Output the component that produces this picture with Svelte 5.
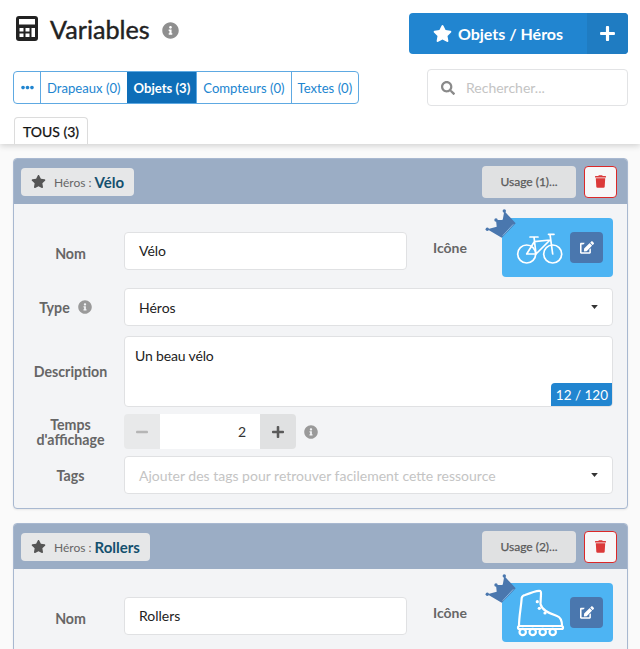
<script>
	const items = [
		{ name: 'Vélo', usage: 1, count: '12 / 120', desc: 'Un beau vélo', time: 2, kind: 'bike' },
		{ name: 'Rollers', usage: 2, count: '11 / 120', desc: 'Des rollers', time: 2, kind: 'roller' }
	];
	const tabs = ['Drapeaux (0)', 'Objets (3)', 'Compteurs (0)', 'Textes (0)'];

	const star = 'M259.3 17.8L194 150.2 47.9 171.5c-26.2 3.8-36.7 36.1-17.7 54.6l105.7 103-25 145.5c-4.5 26.3 23.2 46 46.4 33.7L288 439.6l130.7 68.7c23.2 12.2 50.9-7.4 46.4-33.7l-25-145.5 105.7-103c19-18.5 8.5-50.8-17.7-54.6L382 150.2 316.7 17.8c-11.7-23.6-45.6-23.9-57.4 0z';
	const info = 'M256 8C119.043 8 8 119.083 8 256c0 136.997 111.043 248 248 248s248-111.003 248-248C504 119.083 392.957 8 256 8zm0 110c23.196 0 42 18.804 42 42s-18.804 42-42 42-42-18.804-42-42 18.804-42 42-42zm56 254c0 6.627-5.373 12-12 12h-88c-6.627 0-12-5.373-12-12v-24c0-6.627 5.373-12 12-12h12v-64h-12c-6.627 0-12-5.373-12-12v-24c0-6.627 5.373-12 12-12h64c6.627 0 12 5.373 12 12v100h12c6.627 0 12 5.373 12 12v24z';
	const plus = 'M416 208H272V64c0-17.67-14.33-32-32-32h-32c-17.67 0-32 14.33-32 32v144H32c-17.67 0-32 14.33-32 32v32c0 17.67 14.33 32 32 32h144v144c0 17.67 14.33 32 32 32h32c17.67 0 32-14.33 32-32V304h144c17.67 0 32-14.33 32-32v-32c0-17.67-14.33-32-32-32z';
	const minus = 'M416 208H32c-17.67 0-32 14.33-32 32v32c0 17.67 14.33 32 32 32h384c17.67 0 32-14.33 32-32v-32c0-17.67-14.33-32-32-32z';
	const trash = 'M432 32H312l-9.4-18.7A24 24 0 0 0 281.1 0H166.8a23.72 23.72 0 0 0-21.4 13.3L136 32H16A16 16 0 0 0 0 48v32a16 16 0 0 0 16 16h416a16 16 0 0 0 16-16V48a16 16 0 0 0-16-16zM53.2 467a48 48 0 0 0 47.9 45h245.8a48 48 0 0 0 47.9-45L416 128H32z';
	const edit = 'M402.6 83.2l90.2 90.2c3.8 3.8 3.8 10 0 13.8L274.4 405.6l-92.8 10.3c-12.4 1.4-22.9-9.1-21.5-21.5l10.3-92.8L388.8 83.2c3.8-3.8 10-3.8 13.8 0zm162-22.9l-48.8-48.8c-15.2-15.2-39.9-15.2-55.2 0l-35.4 35.4c-3.8 3.8-3.8 10 0 13.8l90.2 90.2c3.8 3.8 10 3.8 13.8 0l35.4-35.4c15.2-15.3 15.2-40 0-55.2zM384 346.2V448H64V128h73.1c3.2 0 6.2-1.3 8.5-3.5l40-40c7.6-7.6 2.2-20.5-8.5-20.5H48C21.5 64 0 85.5 0 112v352c0 26.5 21.5 48 48 48h352c26.5 0 48-21.5 48-48V306.2c0-10.7-12.9-16-20.5-8.5l-40 40c-2.2 2.3-3.5 5.3-3.5 8.5z';
	const dots = 'M328 256c0 39.8-32.2 72-72 72s-72-32.2-72-72 32.2-72 72-72 72 32.2 72 72zm104-72c-39.8 0-72 32.2-72 72s32.2 72 72 72 72-32.2 72-72-32.2-72-72-72zm-352 0c-39.8 0-72 32.2-72 72s32.2 72 72 72 72-32.2 72-72-32.2-72-72-72z';
	const search = 'M505 442.7L405.3 343c-4.5-4.5-10.6-7-17-7H372c27.6-35.3 44-79.7 44-128C416 93.1 322.9 0 208 0S0 93.1 0 208s93.1 208 208 208c48.3 0 92.7-16.4 128-44v16.3c0 6.4 2.5 12.5 7 17l99.7 99.7c9.4 9.4 24.6 9.4 33.9 0l28.3-28.3c9.4-9.4 9.4-24.6.1-34zM208 336c-70.7 0-128-57.2-128-128 0-70.7 57.2-128 128-128 70.7 0 128 57.2 128 128 0 70.7-57.2 128-128 128z';
</script>

{#snippet icon(d, w, h, cls)}
	<svg class={cls} viewBox="0 0 {w} {h}" fill="currentColor"><path {d} /></svg>
{/snippet}

{#snippet caret()}
	<svg class="caret" viewBox="0 0 10 6" fill="currentColor"><path d="M0 0h10L5 6z" /></svg>
{/snippet}

<div class="page">
	<header class="top">
		<div class="top-row">
			<div class="title">
				<svg class="calc" viewBox="0 0 22 25">
					<rect width="22" height="25" rx="3" fill="#222" />
					<g fill="#fff">
						<rect x="3" y="3" width="16" height="5.500" />
						<rect x="3.500" y="12" width="4" height="3.500" />
						<rect x="9.500" y="12" width="4" height="3.500" />
						<rect x="3.500" y="17.500" width="4" height="3.500" />
						<rect x="9.500" y="17.500" width="4" height="3.500" />
						<rect x="15.500" y="12" width="3.500" height="9" />
					</g>
				</svg>
				<h1>Variables</h1>
				{@render icon(info, 512, 512, 'title-info')}
			</div>
			<div class="add">
				<div class="add-main">{@render icon(star, 576, 512, 'add-star')}<span>Objets / Héros</span></div>
				<div class="add-plus">{@render icon(plus, 448, 512, 'add-plus-icon')}</div>
			</div>
		</div>
		<div class="filter-row">
			<div class="tabs">
				<div class="tab more">{@render icon(dots, 512, 512, 'dots')}</div>
				{#each tabs as tab, i}
					<div class="tab" class:active={i === 1}>{tab}</div>
				{/each}
			</div>
			<div class="search">
				{@render icon(search, 512, 512, 'search-icon')}
				<span>Rechercher...</span>
			</div>
		</div>
		<div class="subtab">TOUS (3)</div>
	</header>

	<main class="list">
		{#each items as item}
			<section class="card">
				<div class="card-head">
					<div class="chip">
						{@render icon(star, 576, 512, 'chip-star')}
						<span class="chip-kind">Héros :</span>
						<span class="chip-name">{item.name}</span>
					</div>
					<div class="usage">Usage ({item.usage})...</div>
					<div class="delete">{@render icon(trash, 448, 512, 'trash')}</div>
				</div>
				<div class="card-body">
					<div class="row name-row">
						<div class="label">Nom</div>
						<div class="input name-input">{item.name}</div>
						<div class="icon-label">Icône</div>
						<div class="icon-box">
							<svg class="crown" viewBox="0 0 40 40">
								<path fill="#4a77ae" d="M24.300 6L22.700 15 16 15 16.700 21.700 7.300 24.300 21.700 32.700 35.700 18.300z" />
								<circle cx="24.300" cy="6" r="1.700" fill="#4a77ae" />
								<circle cx="16" cy="15" r="1.700" fill="#4a77ae" />
								<circle cx="7.300" cy="24.300" r="1.700" fill="#4a77ae" />
								<path d="M33.300 19.300L22.700 30.700" stroke="#86b6e2" stroke-width="1" />
							</svg>
							{#if item.kind === 'bike'}
								<svg class="obj bike" viewBox="0 0 50 36" fill="none" stroke="#fff" stroke-width="1.700" stroke-linecap="round" stroke-linejoin="round">
									<circle cx="11.700" cy="24" r="9" />
									<circle cx="37.700" cy="24" r="9" />
									<path d="M15 7h8M19 7l2 17H11.700l7.600-12.300L35 10 21 24M33.500 4.300H39M35 4.300L37.700 24" />
								</svg>
							{:else}
								<svg class="obj roller" viewBox="0 0 50 56" fill="none" stroke="#fff" stroke-width="2.200" stroke-linecap="round" stroke-linejoin="round">
									<path d="M4 42C4 32 6 24 6.700 14 7 12 8 11.500 10 11 15 9 20 7 24 6.800c2-.1 2 1.200 2 3.200l-.5 10C27 27 36 30 42 32c3 1 5 5 5 10z" />
									<g fill="#fff" stroke="none">
										<circle cx="22.300" cy="17.700" r="1.600" />
										<circle cx="24.300" cy="24.300" r="1.600" />
										<circle cx="30" cy="29" r="1.600" />
									</g>
									<rect x="3" y="42" width="45" height="3" rx="1.500" />
									<circle cx="7.700" cy="48" r="3.200" />
									<circle cx="17.700" cy="48" r="3.200" />
									<circle cx="27.700" cy="48" r="3.200" />
									<circle cx="37.700" cy="48" r="3.200" />
								</svg>
							{/if}
							<div class="edit">{@render icon(edit, 576, 512, 'edit-icon')}</div>
						</div>
					</div>
					<div class="row type-row">
						<div class="label">Type {@render icon(info, 512, 512, 'info')}</div>
						<div class="input select">Héros{@render caret()}</div>
					</div>
					<div class="row desc-row">
						<div class="label">Description</div>
						<div class="input textarea">
							{item.desc}
							<div class="counter">{item.count}</div>
						</div>
					</div>
					<div class="row time-row">
						<div class="label">Temps<br />d'affichage</div>
						<div class="stepper">
							<div class="step off">{@render icon(minus, 448, 512, 'step-icon')}</div>
							<div class="step-value">{item.time}</div>
							<div class="step">{@render icon(plus, 448, 512, 'step-icon')}</div>
						</div>
						{@render icon(info, 512, 512, 'info')}
					</div>
					<div class="row tags-row">
						<div class="label">Tags</div>
						<div class="input select placeholder">Ajouter des tags pour retrouver facilement cette ressource{@render caret()}</div>
					</div>
				</div>
			</section>
		{/each}
	</main>
</div>

<style>
	:global(html), :global(body) {
		margin: 0;
		overflow: hidden;
	}

	.page {
		height: 649px;
		overflow: hidden;
		background: #fafafa;
		font-family: Lato, sans-serif;
		font-size: 14px;
		color: #333;
	}

	.top {
		position: relative;
		height: 144px;
		box-sizing: border-box;
		padding: 13px 12px 0 13px;
		background: #fff;
		box-shadow: 0 2px 6px rgba(0, 0, 0, 0.16);
	}

	.top-row, .filter-row {
		display: flex;
		justify-content: space-between;
	}

	.top-row {
		height: 41px;
	}

	.title {
		display: flex;
		align-items: flex-start;
		padding: 3px 0 0 3px;
	}

	.calc {
		width: 22px;
		height: 25px;
	}

	h1 {
		margin: -3px 0 0 12px;
		font-size: 25.200px;
		line-height: 32px;
		font-weight: 400;
		color: #222;
		-webkit-text-stroke: 0.4px #222;
	}

	.title-info {
		width: 17px;
		height: 17px;
		margin: 6px 0 0 12px;
		color: #8f8f8f;
	}

	.add {
		display: flex;
		width: 219px;
		border-radius: 4px;
		overflow: hidden;
		background: #2185d0;
		color: #fff;
	}

	.add-main {
		flex: 1;
		display: flex;
		align-items: center;
		justify-content: center;
		gap: 6px;
		font-size: 16px;
		font-weight: 700;
	}

	.add-star {
		width: 19px;
		height: 17px;
	}

	.add-plus {
		width: 41px;
		display: flex;
		align-items: center;
		justify-content: center;
		background: #1f7cc2;
	}

	.add-plus-icon {
		width: 15px;
		height: 17px;
	}

	.filter-row {
		align-items: center;
		height: 37px;
		margin-top: 15px;
	}

	.tabs {
		display: flex;
		height: 33px;
		box-sizing: border-box;
		border: 1px solid #5ea9e2;
		border-radius: 4px;
		overflow: hidden;
	}

	.tab {
		display: flex;
		align-items: center;
		padding: 0 6px;
		color: #2185d0;
		border-left: 1px solid #5ea9e2;
		font-size: 13.100px;
	}

	.tab.more {
		border-left: 0;
		padding: 0 6.500px;
	}

	.tab.active {
		background: #0e6eb8;
		color: #fff;
		font-weight: 700;
		border-left-color: #0e6eb8;
	}

	.dots {
		width: 13px;
		height: 13px;
	}

	.search {
		display: flex;
		align-items: center;
		width: 201px;
		height: 37px;
		box-sizing: border-box;
		border: 1px solid #e2e3e5;
		border-radius: 4px;
		padding-left: 13px;
		color: #c4c4c4;
	}

	.search-icon {
		width: 14px;
		height: 14px;
		margin-right: 11px;
		color: #8a8a8a;
	}

	.subtab {
		width: 74px;
		height: 27px;
		box-sizing: border-box;
		margin: 11px 0 0 1px;
		border: 1px solid #dcdcdc;
		border-bottom: 0;
		border-radius: 4px 4px 0 0;
		text-align: center;
		line-height: 27px;
		color: #111;
		-webkit-text-stroke: 0.25px #111;
	}

	.list {
		padding: 14px 12px 0 13px;
		display: flex;
		flex-direction: column;
		gap: 14px;
	}

	.card {
		border: 1px solid #a8b8d0;
		border-radius: 4px;
		background: #f3f4f6;
		box-shadow: 0 1px 2px rgba(0, 0, 0, 0.08);
		overflow: hidden;
		flex-shrink: 0;
	}

	.card-head {
		display: flex;
		align-items: center;
		height: 45px;
		padding: 0 10px 0 7px;
		background: #9badc5;
	}

	.chip {
		display: flex;
		align-items: center;
		height: 28px;
		padding: 0 10px;
		background: #e6e7e8;
		border-radius: 4px;
		margin-right: auto;
	}

	.chip-star {
		width: 15px;
		height: 13px;
		margin-right: 8px;
		color: #555;
	}

	.chip-kind {
		font-size: 12px;
		color: #666;
		margin: 1px 3px 0 0;
	}

	.chip-name {
		font-size: 15px;
		font-weight: 700;
		color: #14506e;
		margin-top: 1px;
	}

	.usage {
		width: 94px;
		height: 32px;
		line-height: 32px;
		text-align: center;
		background: #e0e1e2;
		border-radius: 4px;
		font-size: 12px;
		color: #5a5a5a;
		-webkit-text-stroke: 0.25px #5a5a5a;
	}

	.delete {
		width: 33px;
		height: 32px;
		box-sizing: border-box;
		margin-left: 8px;
		display: flex;
		align-items: center;
		justify-content: center;
		background: #f7f7f8;
		border: 1px solid #db2828;
		border-radius: 4px;
		color: #db3a3a;
	}

	.trash {
		width: 11px;
		height: 13px;
	}

	.card-body {
		padding: 14px 14px 14px 0;
	}

	.row {
		display: flex;
		align-items: center;
	}

	.label {
		width: 107px;
		padding-left: 3px;
		flex-shrink: 0;
		display: flex;
		align-items: center;
		justify-content: center;
		gap: 8px;
		text-align: center;
		font-size: 14.200px;
		font-weight: 700;
		color: #666;
		line-height: 15px;
	}

	.time-row .label {
		display: block;
	}

	.type-row .label {
		box-sizing: border-box;
		width: 110px;
		padding: 0 7px 0 0;
	}

	.input {
		position: relative;
		flex: 1;
		box-sizing: border-box;
		height: 38px;
		display: flex;
		align-items: center;
		padding: 0 14px;
		background: #fff;
		border: 1px solid #e0e1e3;
		border-radius: 4px;
		color: #222;
	}

	.name-row {
		height: 59px;
	}

	.name-row .label {
		padding-top: 12px;
	}

	.name-input {
		flex: 0 0 283px;
		margin-top: 6px;
	}

	.icon-label {
		width: 95px;
		box-sizing: border-box;
		padding-left: 26px;
		font-weight: 700;
		color: #666;
	}

	.icon-box {
		position: relative;
		width: 111px;
		height: 59px;
		display: flex;
		align-items: center;
		background: #4db4f3;
		border-radius: 4px;
	}

	.crown {
		position: absolute;
		left: -22px;
		top: -13px;
		width: 40px;
		height: 40px;
	}

	.obj {
		position: absolute;
		left: 13px;
	}

	.bike {
		width: 50px;
		height: 36px;
		top: 12px;
	}

	.roller {
		width: 50px;
		height: 56px;
		top: 1px;
	}

	.edit {
		position: absolute;
		left: 68px;
		top: 14px;
		width: 33px;
		height: 31px;
		display: flex;
		align-items: center;
		justify-content: center;
		background: #4a77ae;
		border-radius: 4px;
		color: #fff;
	}

	.edit-icon {
		width: 14px;
		height: 13px;
	}

	.type-row {
		margin-top: 11px;
	}

	.select {
		justify-content: space-between;
	}

	.caret {
		width: 7px;
		height: 4px;
		color: #333;
	}

	.info {
		width: 14px;
		height: 14px;
		color: #9a9a9a;
	}

	.desc-row {
		margin-top: 10px;
	}

	.textarea {
		height: 71px;
		align-items: flex-start;
		padding: 10px 10px;
		overflow: hidden;
		letter-spacing: -0.15px;
	}

	.counter {
		position: absolute;
		right: -1px;
		bottom: -1px;
		height: 24px;
		line-height: 24px;
		padding: 0 5px;
		background: #2185d0;
		color: #fff;
		border-radius: 4px 0 4px 0;
		font-size: 13.500px;
		letter-spacing: 0;
	}

	.time-row {
		margin-top: 7px;
		height: 35px;
	}

	.stepper {
		display: flex;
		width: 172px;
		height: 35px;
		border-radius: 4px;
		overflow: hidden;
		margin-right: 8px;
	}

	.step {
		width: 36px;
		flex-shrink: 0;
		display: flex;
		align-items: center;
		justify-content: center;
		background: #e0e1e2;
		color: #5a5a5a;
	}

	.step.off {
		color: #b5b5b5;
		background: #e8e9ea;
	}

	.step-icon {
		width: 12px;
		height: 14px;
	}

	.step-value {
		flex: 1;
		background: #fff;
		text-align: right;
		line-height: 35px;
		padding-right: 14px;
	}

	.tags-row {
		margin-top: 7px;
	}

	.placeholder {
		color: #c4c4c4;
	}
</style>
